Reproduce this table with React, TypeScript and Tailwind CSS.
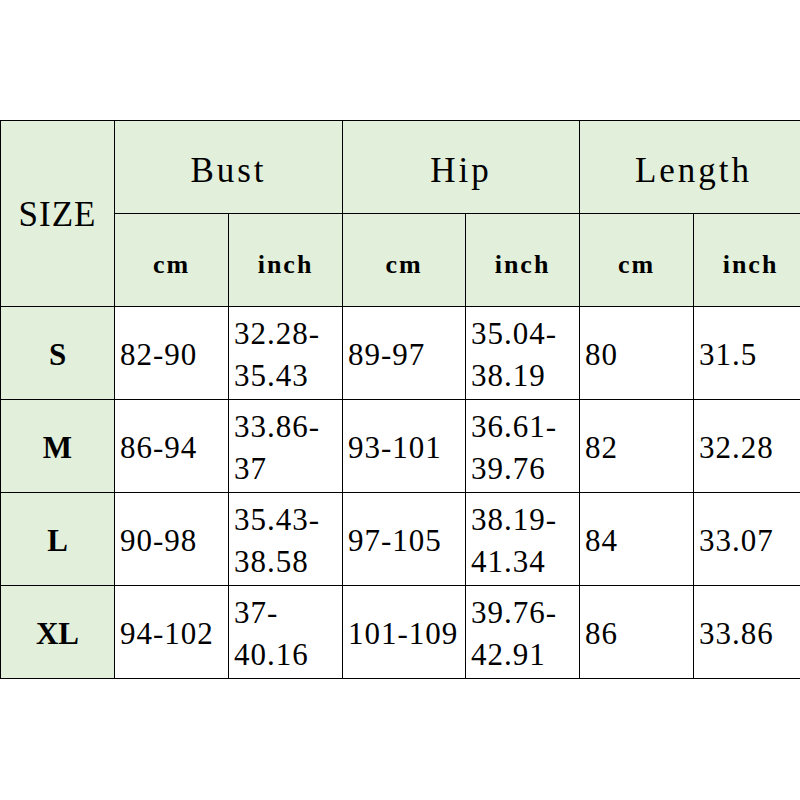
import React from 'react';

type Row = { size: string; cells: string[][] };

const rows: Row[] = [
  { size: 'S', cells: [['82-90'], ['32.28-', '35.43'], ['89-97'], ['35.04-', '38.19'], ['80'], ['31.5']] },
  { size: 'M', cells: [['86-94'], ['33.86-', '37'], ['93-101'], ['36.61-', '39.76'], ['82'], ['32.28']] },
  { size: 'L', cells: [['90-98'], ['35.43-', '38.58'], ['97-105'], ['38.19-', '41.34'], ['84'], ['33.07']] },
  { size: 'XL', cells: [['94-102'], ['37-', '40.16'], ['101-109'], ['39.76-', '42.91'], ['86'], ['33.86']] },
];

const head = 'bg-[#e2efda] flex items-center justify-center';

export default function App() {
  return (
    <div className="w-[800px] h-[800px] bg-white overflow-hidden pt-[120px] font-['Liberation_Serif'] text-black">
      <div className="grid w-[807px] grid-cols-[113px_113px_113px_122px_113px_113px_113px] auto-rows-[92px] gap-px bg-black border border-black">
        <div className={`${head} row-span-2 text-[35px] tracking-[1px] pt-1`}>SIZE</div>
        {['Bust', 'Hip', 'Length'].map((h) => (
          <div key={h} className={`${head} col-span-2 text-[35px] tracking-[3px] pt-2`}>
            {h}
          </div>
        ))}
        {['cm', 'inch', 'cm', 'inch', 'cm', 'inch'].map((h, i) => (
          <div key={i} className={`${head} font-bold text-[26px] tracking-[2px] pt-2`}>
            {h}
          </div>
        ))}
        {rows.map((r) => (
          <React.Fragment key={r.size}>
            <div className={`${head} font-bold text-[31px] pt-1`}>{r.size}</div>
            {r.cells.map((lines, i) => (
              <div key={i} className="bg-white flex flex-col justify-center pl-[5px] pt-1 text-[31px] leading-[42px] tracking-[1px] whitespace-nowrap overflow-hidden">
                {lines.map((l, j) => (
                  <div key={j}>{l}</div>
                ))}
              </div>
            ))}
          </React.Fragment>
        ))}
      </div>
    </div>
  );
}
